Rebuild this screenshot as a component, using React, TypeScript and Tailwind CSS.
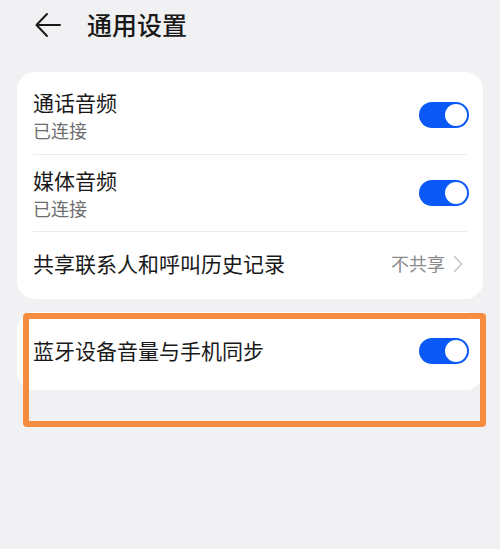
import React from 'react'

const font = { fontFamily: '"Noto Sans CJK SC", "Noto Sans", sans-serif' }

function Toggle() {
  return (
    <div className="w-[50px] h-[26px] rounded-full bg-[#0a59f7] flex items-center justify-end pr-[2px] shrink-0">
      <div className="w-[22px] h-[22px] rounded-full bg-white" />
    </div>
  )
}

function Row({ title, sub, h }: { title: string; sub: string; h: string }) {
  return (
    <div>
      <div className={`${h} flex items-center justify-between pl-4 pr-[14px]`}>
        <div className="flex flex-col">
          <span className="text-[21px] leading-[30px] text-[#191919]">{title}</span>
          <span className="text-[18px] leading-[26px] text-[#6e6e6e]">{sub}</span>
        </div>
        <Toggle />
      </div>
      <div className="mx-4 h-px bg-[#ececec]" />
    </div>
  )
}

export default function App() {
  return (
    <div className="relative w-[500px] h-[549px] bg-[#f1f1f3] overflow-hidden" style={font}>
      {/* header */}
      <div className="h-[50px] flex items-center pl-[35px]">
        <svg width="26" height="26" viewBox="0 0 26 26" fill="none" stroke="#1a1a1a" strokeWidth="2" strokeLinecap="round" strokeLinejoin="round">
          <path d="M25 13H2" />
          <path d="M12 2L1.5 13L12 24" />
        </svg>
        <span className="ml-[26px] text-[25px] font-medium text-[#191919]">通用设置</span>
      </div>

      {/* card 1 */}
      <div className="mt-[22px] mx-[17px] bg-white rounded-[18px] pt-[4px] pb-[4px]">
        <Row title="通话音频" sub="已连接" h="h-[78px]" />
        <Row title="媒体音频" sub="已连接" h="h-[76px]" />
        <div className="h-[63px] flex items-center justify-between pl-4 pr-[20px]">
          <span className="text-[21px] text-[#191919]">共享联系人和呼叫历史记录</span>
          <div className="flex items-center gap-[8px]">
            <span className="text-[18px] text-[#8a8a8a]">不共享</span>
            <svg width="10" height="18" viewBox="0 0 10 18" fill="none" stroke="#c8c8c8" strokeWidth="1.6" strokeLinecap="round" strokeLinejoin="round">
              <path d="M1.5 1.5L8.5 9L1.5 16.5" />
            </svg>
          </div>
        </div>
      </div>

      {/* card 2 */}
      <div className="mt-[13px] mx-[17px] bg-white rounded-[18px]">
        <div className="h-[78px] flex items-center justify-between pl-4 pr-[14px]">
          <span className="text-[21px] text-[#191919]">蓝牙设备音量与手机同步</span>
          <Toggle />
        </div>
      </div>

      {/* highlight annotation */}
      <div className="absolute left-[23px] top-[313px] w-[463px] h-[114px] border-[6px] border-[#f68c3e] rounded-[4px]" />
    </div>
  )
}
